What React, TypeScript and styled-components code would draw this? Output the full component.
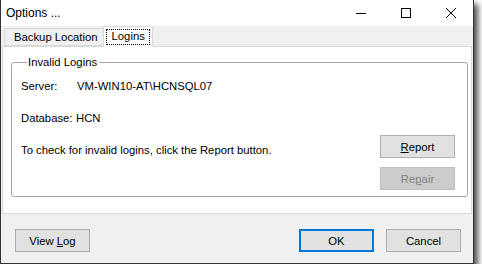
import React from "react";
import styled, { createGlobalStyle } from "styled-components";

const GlobalStyle = createGlobalStyle`
  html, body {
    margin: 0;
    padding: 0;
    background: #ffffff;
  }
  body {
    font-family: "Liberation Sans", Arial, sans-serif;
    font-size: 11.3px;
    color: #000000;
  }
`;

const Window = styled.div`
  width: 474px;
  height: 264px;
  box-sizing: border-box;
  display: flex;
  flex-direction: column;
  background: #f0f0f0;
  border: 1px solid #333333;
  border-top: none;
  box-shadow: 4px 4px 6px rgba(0, 0, 0, 0.7);
`;

const TitleBar = styled.div`
  height: 26px;
  display: flex;
  align-items: center;
  background: #ffffff;
  padding-left: 5px;
`;

const Title = styled.span`
  flex: 1;
  font-size: 12px;
`;

const CaptionButton = styled.div`
  width: 45px;
  height: 26px;
  display: flex;
  align-items: center;
  justify-content: center;
`;

const Body = styled.div`
  flex: 1;
  display: flex;
  flex-direction: column;
  padding: 0 1px;
`;

const TabStrip = styled.div`
  height: 20px;
  display: flex;
  align-items: flex-end;
  padding-left: 2px;
`;

const Tab = styled.div<{ $active?: boolean }>`
  box-sizing: border-box;
  height: ${(p) => (p.$active ? "21px" : "18px")};
  margin-bottom: ${(p) => (p.$active ? "-1px" : "0")};
  padding: ${(p) => (p.$active ? "2px 2px 0 2px" : "2px 5px 0 9px")};
  background: ${(p) => (p.$active ? "#ffffff" : "#f0f0f0")};
  border: 1px solid #d9d9d9;
  border-bottom: ${(p) => (p.$active ? "none" : "1px solid #d9d9d9")};
  border-right: ${(p) => (p.$active ? "1px solid #d9d9d9" : "none")};
  position: relative;
  z-index: ${(p) => (p.$active ? 1 : 0)};
`;

const FocusLabel = styled.span`
  display: inline-block;
  padding: 0 4px 1px 5px;
  border: 1px dotted #000000;
  line-height: 13px;
`;

const Panel = styled.div`
  box-sizing: border-box;
  width: 470px;
  height: 168px;
  background: #ffffff;
  border: 1px solid #d9d9d9;
  padding: 8px 3px 0 8px;
`;

const GroupBox = styled.fieldset`
  margin: 0;
  height: 142px;
  box-sizing: border-box;
  border: 1px solid #a8a8a8;
  border-radius: 3px;
  padding: 0 12px 0 9px;
  display: flex;
`;

const Legend = styled.legend`
  padding: 0 2px 0 1px;
  margin-left: 6px;
  line-height: 14px;
`;

const InfoColumn = styled.div`
  flex: 1;
  display: flex;
  flex-direction: column;
  gap: 17px;
  padding-top: 10px;
`;

const InfoLine = styled.div`
  line-height: 15px;
  display: flex;
`;

const Label = styled.span<{ $width: number }>`
  width: ${(p) => p.$width}px;
`;

const ActionColumn = styled.div`
  display: flex;
  flex-direction: column;
  gap: 9px;
  padding-top: 66px;
`;

const Button = styled.button<{ $primary?: boolean }>`
  box-sizing: border-box;
  width: 75px;
  height: 23px;
  padding: 0;
  font-family: inherit;
  font-size: 11.3px;
  color: #000000;
  background: #e1e1e1;
  border: ${(p) => (p.$primary ? "2px solid #0078d7" : "1px solid #adadad")};
  &:disabled {
    background: #cccccc;
    border-color: #bfbfbf;
    color: #838383;
  }
`;

const Footer = styled.div`
  flex: 1;
  display: flex;
  align-items: flex-start;
  padding: 15px 11px 0 13px;
`;

const Spacer = styled.div`
  flex: 1;
`;

const FooterRight = styled.div`
  display: flex;
  gap: 12px;
`;

export default function App() {
  return (
    <>
      <GlobalStyle />
      <Window>
        <TitleBar>
          <Title>Options ...</Title>
          <CaptionButton>
            <svg width="10" height="10" viewBox="0 0 10 10">
              <path d="M0 5.5h10" stroke="#000" strokeWidth="1" />
            </svg>
          </CaptionButton>
          <CaptionButton>
            <svg width="10" height="10" viewBox="0 0 10 10">
              <rect x="0.5" y="0.5" width="9" height="9" fill="none" stroke="#000" />
            </svg>
          </CaptionButton>
          <CaptionButton>
            <svg width="10" height="10" viewBox="0 0 10 10">
              <path d="M0 0L10 10M10 0L0 10" stroke="#000" strokeWidth="1" />
            </svg>
          </CaptionButton>
        </TitleBar>
        <Body>
          <TabStrip>
            <Tab>Backup Location</Tab>
            <Tab $active>
              <FocusLabel>Logins</FocusLabel>
            </Tab>
          </TabStrip>
          <Panel>
            <GroupBox>
              <Legend>Invalid Logins</Legend>
              <InfoColumn>
                <InfoLine>
                  <Label $width={56}>Server:</Label>
                  <span>VM-WIN10-AT\HCNSQL07</span>
                </InfoLine>
                <InfoLine>
                  <Label $width={55}>Database:</Label>
                  <span>HCN</span>
                </InfoLine>
                <InfoLine>To check for invalid logins, click the Report button.</InfoLine>
              </InfoColumn>
              <ActionColumn>
                <Button>
                  <u>R</u>eport
                </Button>
                <Button disabled>
                  Re<u>p</u>air
                </Button>
              </ActionColumn>
            </GroupBox>
          </Panel>
          <Footer>
            <Button>
              View <u>L</u>og
            </Button>
            <Spacer />
            <FooterRight>
              <Button $primary>OK</Button>
              <Button>Cancel</Button>
            </FooterRight>
          </Footer>
        </Body>
      </Window>
    </>
  );
}
